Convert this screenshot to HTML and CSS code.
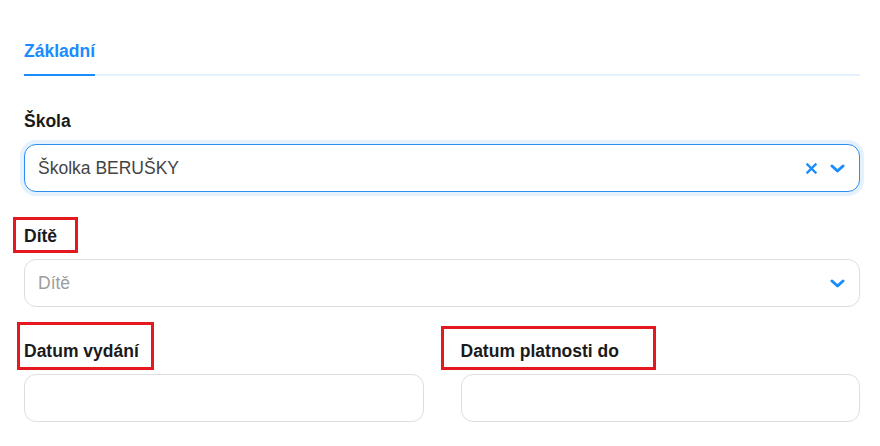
FILE: index.html
```html
<!DOCTYPE html>
<html lang="cs">
<head>
  <meta charset="UTF-8">
  <title>Základní</title>
  <link rel="stylesheet" href="styles.css">
</head>
<body>
<div class="page">
  <div class="tabs">
    <span class="tab active">Základní</span>
  </div>

  <div class="field">
    <label class="label">Škola</label>
    <div class="select focused">
      <span class="value">Školka BERUŠKY</span>
      <span class="icons">
        <svg class="icon-clear" width="11" height="11" viewBox="0 0 11 11"><path d="M1.5 1.5 L9.5 9.5 M9.5 1.5 L1.5 9.5" stroke="#1a8cff" stroke-width="2.4" stroke-linecap="square"/></svg>
        <svg class="icon-caret" width="15" height="9" viewBox="0 0 15 9"><path d="M2 2 L7.5 7 L13 2" fill="none" stroke="#1a8cff" stroke-width="3" stroke-linecap="round" stroke-linejoin="round"/></svg>
      </span>
    </div>
  </div>

  <div class="field">
    <label class="label">Dítě<span class="mark mark-child"></span></label>
    <div class="select">
      <span class="placeholder">Dítě</span>
      <span class="icons">
        <svg class="icon-caret" width="15" height="9" viewBox="0 0 15 9"><path d="M2 2 L7.5 7 L13 2" fill="none" stroke="#1a8cff" stroke-width="3" stroke-linecap="round" stroke-linejoin="round"/></svg>
      </span>
    </div>
  </div>

  <div class="row">
    <div class="field">
      <label class="label">Datum vydání<span class="mark mark-issued"></span></label>
      <div class="input"></div>
    </div>
    <div class="field">
      <label class="label">Datum platnosti do<span class="mark mark-valid"></span></label>
      <div class="input"></div>
    </div>
  </div>
</div>
</body>
</html>
```

FILE: styles.css
```css
body { margin: 0; background: #fff; font-family: "Liberation Sans", Arial, sans-serif; font-size: 17.5px; color: #222; }
.page { width: 836px; padding: 41px 0 0 24px; }
.tabs { display: flex; border-bottom: 2px solid #e4f1fd; }
.tab { line-height: 20px; font-weight: bold; padding-bottom: 13px; margin-bottom: -2px; }
.tab.active { color: #1a8cff; border-bottom: 2px solid #1a8cff; }
.tabs + .field { margin-top: 35px; }
.field { margin-bottom: 34px; }
.label { position: relative; display: inline-block; line-height: 20px; font-weight: bold; color: #1a1a1a; margin-bottom: 13px; }
.select, .input { box-sizing: border-box; height: 48px; border: 1px solid #dedede; border-radius: 12px; background: #fff; display: flex; align-items: center; padding: 0 14px 0 13px; }
.select.focused { border-color: #2a8ef5; box-shadow: 0 0 0 4px #e5f1fd; }
.value { flex: 1; color: #444; }
.placeholder { flex: 1; color: #9d9d9d; }
.icons { display: flex; align-items: center; gap: 13px; }
.icon-clear { display: block; }
.icon-caret { display: block; }
.row { display: grid; grid-template-columns: 1fr 1fr; gap: 37px; }
.row .field { margin-bottom: 0; }
.mark { position: absolute; border: 3px solid #e3191f; box-sizing: border-box; }
.mark-child { left: -11px; top: -9px; width: 65px; height: 36px; }
.mark-issued { left: -7px; top: -19px; width: 137px; height: 48px; }
.mark-valid { left: -20px; top: -15px; width: 215px; height: 44px; }
```
